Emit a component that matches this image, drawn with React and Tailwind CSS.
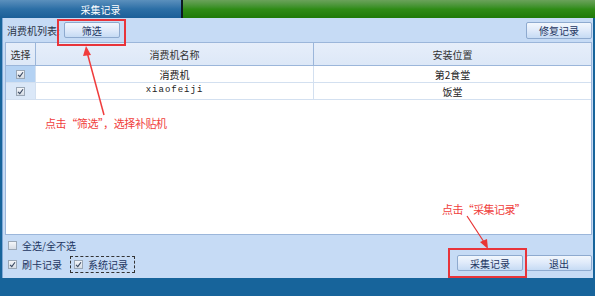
import React from "react";

const cjk = { fontFamily: '"Noto Sans CJK SC", "Noto Sans", sans-serif' };

const Check = ({ checked = true }) => (
  <span className="inline-flex w-[9px] h-[9px] border border-[#9aa7b6] bg-gradient-to-b from-[#f4f6f9] to-[#d6dde6] items-center justify-center">
    {checked && (
      <svg width="7" height="7" viewBox="0 0 7 7">
        <path d="M1 3.8 L2.8 5.6 L6 1.2" stroke="#3b4a63" strokeWidth="1.1" fill="none" />
      </svg>
    )}
  </span>
);

const Btn = ({ children, className = "" }) => (
  <div
    className={
      "flex items-center justify-center h-[16px] border border-[#8eaacf] rounded-[2px] bg-gradient-to-b from-[#f2f7fd] via-[#dfeafa] to-[#c6dbf4] text-[10px] text-[#1d3561] " +
      className
    }
  >
    {children}
  </div>
);

const rows = [
  { name: "消费机", place: "第2食堂", sel: true },
  { name: "xiaofeiji", place: "饭堂", sel: false, mono: true },
];

export default function App() {
  return (
    <div className="relative w-[595px] h-[296px] overflow-hidden bg-[#17649b] flex flex-col" style={cjk}>
      {/* title bar */}
      <div className="flex h-[18px] shrink-0">
        <div className="w-[181px] bg-gradient-to-b from-[#5b90bd] via-[#2c6fa6] to-[#1b5f98] flex items-center justify-center text-white text-[10px]">
          <span className="ml-[20px]">采集记录</span>
        </div>
        <div className="w-[2px] bg-[#0d1a22]" />
        <div className="flex-1 bg-gradient-to-b from-[#6aa25a] via-[#2f8c16] to-[#1f7a08]" />
      </div>

      {/* panel */}
      <div className="flex flex-col h-[260px] mx-[2px] bg-[#c6dbf5] border-l border-[#7fa8d6]">
        <div className="flex items-center h-[24px] pl-[4px] pr-[1px] text-[10px] text-[#2a3347]">
          <span className="whitespace-nowrap">消费机列表:</span>
          <Btn className="w-[56px] ml-[4px]">筛选</Btn>
          <div className="flex-1" />
          <Btn className="w-[66px] h-[17px]">修复记录</Btn>
        </div>

        {/* table */}
        <div className="ml-[2px] mr-[1px] h-[193px] bg-white border border-[#9bb6da] flex flex-col">
          <div className="flex h-[23px] bg-gradient-to-b from-[#e6eefa] to-[#dde8f7] border-b border-[#9bb6da] text-[10px] text-[#333]">
            <div className="w-[30px] flex items-center justify-center border-r border-[#9bb6da]">选择</div>
            <div className="w-[278px] flex items-center justify-center border-r border-[#9bb6da]">消费机名称</div>
            <div className="flex-1 flex items-center justify-center">安装位置</div>
          </div>
          {rows.map((r) => (
            <div key={r.name} className="flex h-[17px] border-b border-[#d3e0f0] text-[10px] text-[#222]">
              <div className={"w-[30px] flex items-center justify-center border-r border-[#d3e0f0] " + (r.sel ? "bg-[#b4d2f3]" : "bg-[#dbe8f8]")}>
                <Check />
              </div>
              <div
                className="w-[278px] flex items-center justify-center border-r border-[#d3e0f0]"
                style={r.mono ? { fontFamily: '"Liberation Mono", monospace', fontSize: 9, letterSpacing: 1 } : undefined}
              >
                {r.name}
              </div>
              <div className="flex-1 flex items-center justify-center">{r.place}</div>
            </div>
          ))}
        </div>

        {/* bottom */}
        <div className="flex flex-1 text-[10px] text-[#1d3561]">
          <div className="flex flex-col pl-[5px] pt-[4px] gap-[4px]">
            <div className="flex items-center gap-[5px] h-[13px]">
              <Check checked={false} />
              <span>全选/全不选</span>
            </div>
            <div className="flex items-center h-[17px]">
              <Check />
              <span className="ml-[5px]">刷卡记录</span>
              <div className="ml-[8px] flex items-center h-[17px] px-[3px] border border-dashed border-[#333] gap-[5px]">
                <Check />
                <span className="mr-[3px]">系统记录</span>
              </div>
            </div>
          </div>
          <div className="flex-1" />
          <div className="flex items-start pt-[20px] gap-[3px] pr-[1px]">
            <Btn className="w-[66px]">采集记录</Btn>
            <Btn className="w-[66px]">退出</Btn>
          </div>
        </div>
      </div>

      {/* annotations */}
      <div className="absolute left-[57px] top-[19px] w-[69px] h-[27px] border-2 border-[#e8343a]" />
      <div className="absolute left-[448px] top-[248px] w-[79px] h-[30px] border-2 border-[#e8343a]" />
      <svg className="absolute left-0 top-0" width="595" height="296">
        <line x1="104" y1="115" x2="87" y2="52" stroke="#f03c3c" strokeWidth="1.5" />
        <polygon points="86,46 83,56 91,55" fill="#f03c3c" />
        <line x1="467" y1="216" x2="484" y2="242" stroke="#e83434" strokeWidth="1.2" />
        <polygon points="488,249 480,242 487,239" fill="#e83434" />
      </svg>
      <div className="absolute left-[45px] top-[115px] text-[11px] tracking-[-0.4px] text-[#f0403c] whitespace-nowrap">
        点击“筛选”，选择补贴机
      </div>
      <div className="absolute left-[442px] top-[201px] text-[11px] tracking-[-0.6px] text-[#f0403c] whitespace-nowrap">
        点击“采集记录”
      </div>
    </div>
  );
}
